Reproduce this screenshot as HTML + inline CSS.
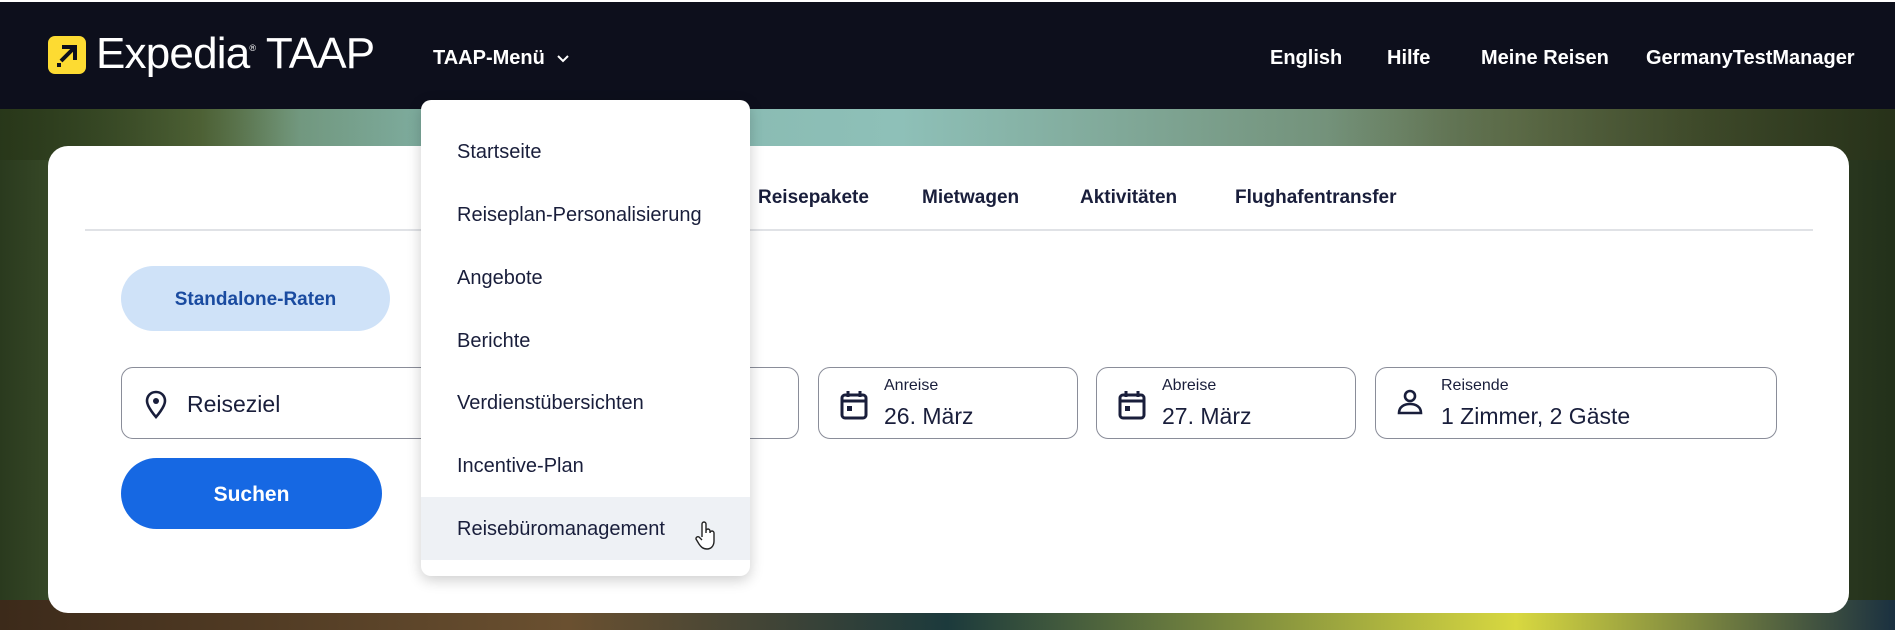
<!DOCTYPE html>
<html><head><meta charset="utf-8"><style>
*{margin:0;padding:0;box-sizing:border-box}
body{width:1895px;height:630px;overflow:hidden;position:relative;font-family:"Liberation Sans",sans-serif;color:#191e3b;
background:linear-gradient(90deg,#2a3a1e 0px,#5a7040 200px,#7fb0a6 300px,#8ec0b8 900px,#6f8a70 1400px,#3e4c2c 1700px,#22301a 1895px)}
.nav{position:absolute;left:0;top:2px;width:1895px;height:107px;background:#0d0f1c}
.topline{position:absolute;left:0;top:0;width:1895px;height:2px;background:#fff}
.logo{position:absolute;left:48px;top:36px;width:38px;height:38px;background:#fddb32;border-radius:7px}
.brand{position:absolute;left:96px;top:29px;font-size:44px;color:#fff;letter-spacing:-0.8px}
.nl{position:absolute;top:47px;color:#fff;font-weight:bold;font-size:20px}
.card{position:absolute;left:48px;top:146px;width:1801px;height:467px;background:#fff;border-radius:20px}
.tab{position:absolute;top:187px;font-weight:bold;font-size:19px}
.line{position:absolute;left:85px;top:229px;width:1728px;height:2px;background:#e0e2e6}
.pill{position:absolute;left:121px;top:266px;width:269px;height:65px;border-radius:33px;background:#cfe2f8;color:#1a4ba0;font-weight:bold;font-size:19px;text-align:center;line-height:67px}
.f{position:absolute;top:367px;height:72px;border:1px solid #8a8d99;border-radius:12px;background:#fff}
.lab{position:absolute;left:65px;top:9px;font-size:16px}
.val{position:absolute;left:65px;top:35px;font-size:23px}
.btn{position:absolute;left:121px;top:458px;width:261px;height:71px;border-radius:36px;background:#1668e3;color:#fff;font-weight:bold;font-size:21px;text-align:center;line-height:73px}
.dd{position:absolute;left:421px;top:100px;width:329px;height:476px;background:#fff;border-radius:10px;box-shadow:0 4px 14px rgba(0,0,0,.2)}
.mi{position:absolute;left:36px;font-size:20px}
.hov{position:absolute;left:0;top:397px;width:329px;height:63px;background:#eef1f5}
</style></head><body>
<div style="position:absolute;left:0;top:100px;width:1895px;height:60px;background:linear-gradient(90deg,rgba(40,55,25,.9),rgba(90,110,60,.4) 15%,rgba(0,0,0,0) 25%,rgba(0,0,0,0) 70%,rgba(90,100,60,.6) 80%,rgba(40,50,25,.8))"></div>
<div style="position:absolute;left:0;top:600px;width:1895px;height:30px;background:linear-gradient(90deg,#3c2a1a,#6a5030 30%,#1c3a3c 50%,#d8d840 80%,#1a3040)"></div>
<div class="nav"></div><div class="topline"></div>
<div class="logo"><svg width="38" height="38" viewBox="0 0 38 38"><path d="M14 11h13v13" fill="none" stroke="#0d0f1c" stroke-width="4"/><path d="M26 12L13 25" stroke="#0d0f1c" stroke-width="4"/><rect x="9" y="27" width="4" height="4" fill="#0d0f1c"/></svg></div>
<div class="brand">Expedia<span style="font-size:9px;vertical-align:top;position:relative;top:14px">®</span> TAAP</div>
<div class="nl" style="left:433px">TAAP-Menü <svg width="14" height="10" viewBox="0 0 14 10" style="margin-left:6px"><path d="M2 2l5 5 5-5" fill="none" stroke="#fff" stroke-width="2"/></svg></div>
<div class="nl" style="left:1270px">English</div>
<div class="nl" style="left:1387px">Hilfe</div>
<div class="nl" style="left:1481px">Meine Reisen</div>
<div class="nl" style="left:1646px">GermanyTestManager</div>
<div class="card"></div>
<div class="tab" style="left:758px">Reisepakete</div>
<div class="tab" style="left:922px">Mietwagen</div>
<div class="tab" style="left:1080px">Aktivitäten</div>
<div class="tab" style="left:1235px">Flughafentransfer</div>
<div class="line"></div>
<div class="pill">Standalone-Raten</div>
<div class="f" style="left:121px;width:678px"><svg style="position:absolute;left:22px;top:22px" width="24" height="30" viewBox="0 0 24 30"><path d="M12 2C6.5 2 3 6 3 11c0 6 9 16 9 16s9-10 9-16c0-5-3.5-9-9-9z" fill="none" stroke="#191e3b" stroke-width="2.6"/><circle cx="12" cy="11" r="3" fill="#191e3b"/></svg><div style="position:absolute;left:65px;top:23px;font-size:23px">Reiseziel</div></div>
<div class="f" style="left:818px;width:260px"><svg style="position:absolute;left:20px;top:21px" width="30" height="32" viewBox="0 0 30 32"><rect x="3" y="6" width="24" height="23" rx="3" fill="none" stroke="#191e3b" stroke-width="3"/><path d="M3 12h24M9 2v6M21 2v6" stroke="#191e3b" stroke-width="3"/><rect x="8" y="17" width="5" height="5" fill="#191e3b"/></svg><div class="lab">Anreise</div><div class="val">26. März</div></div>
<div class="f" style="left:1096px;width:260px"><svg style="position:absolute;left:20px;top:21px" width="30" height="32" viewBox="0 0 30 32"><rect x="3" y="6" width="24" height="23" rx="3" fill="none" stroke="#191e3b" stroke-width="3"/><path d="M3 12h24M9 2v6M21 2v6" stroke="#191e3b" stroke-width="3"/><rect x="8" y="17" width="5" height="5" fill="#191e3b"/></svg><div class="lab">Abreise</div><div class="val">27. März</div></div>
<div class="f" style="left:1375px;width:402px"><svg style="position:absolute;left:20px;top:20px" width="28" height="30" viewBox="0 0 28 30"><circle cx="14" cy="8" r="5" fill="none" stroke="#191e3b" stroke-width="2.6"/><path d="M3 25c0-6 5-9 11-9s11 3 11 9z" fill="none" stroke="#191e3b" stroke-width="2.6"/></svg><div class="lab">Reisende</div><div class="val">1 Zimmer, 2 Gäste</div></div>
<div class="btn">Suchen</div>
<div class="dd">
<div class="hov"></div>
<div class="mi" style="top:41px">Startseite</div>
<div class="mi" style="top:104px">Reiseplan-Personalisierung</div>
<div class="mi" style="top:167px">Angebote</div>
<div class="mi" style="top:230px">Berichte</div>
<div class="mi" style="top:292px">Verdienstübersichten</div>
<div class="mi" style="top:355px">Incentive-Plan</div>
<div class="mi" style="top:418px">Reisebüromanagement</div>
<svg style="position:absolute;left:274px;top:421px" width="24" height="30" viewBox="0 0 24 30"><path d="M7 16V3a2 2 0 0 1 4 0v9l0-2a2 2 0 0 1 4 0v2a2 2 0 0 1 4 0v8c0 5-3 8-7 8s-6-2-8-5l-3-5a2 2 0 0 1 3-2l3 3" fill="#fff" stroke="#222" stroke-width="1.4"/></svg>
</div>
</body></html>
